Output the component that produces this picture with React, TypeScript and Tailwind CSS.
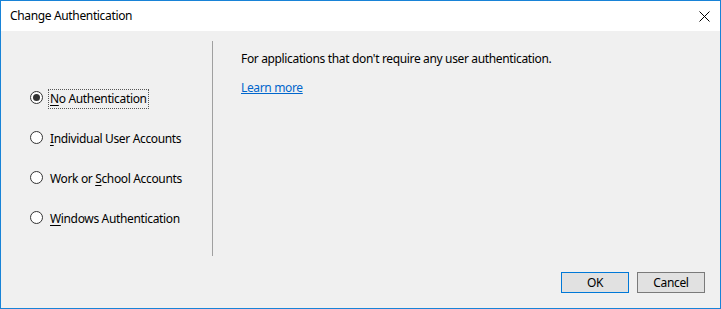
const options = [
  { key: 'N', before: '', rest: 'o Authentication', selected: true },
  { key: 'I', before: '', rest: 'ndividual User Accounts', selected: false },
  { key: 'S', before: 'Work or\u00a0', rest: 'chool Accounts', selected: false },
  { key: 'W', before: '', rest: 'indows Authentication', selected: false },
]

const RadioRow = ({
  option,
}: {
  option: (typeof options)[number]
}) => {
  return (
    <div className="flex items-center h-[20px]">
      <span className="w-[13px] h-[13px] rounded-full border border-[#333] bg-white flex items-center justify-center -mt-[3px]">
        {option.selected && (
          <span className="w-[7px] h-[7px] rounded-full bg-[#333]" />
        )}
      </span>
      <span
        className={
          option.selected
            ? 'ml-[5px] px-[1px] border border-dotted border-[#555] h-[20px] leading-[18px]'
            : 'ml-[5px] px-[1px] border border-transparent h-[20px] leading-[18px]'
        }
      >
        {option.before}
        <span className="underline underline-offset-2">{option.key}</span>
        {option.rest}
      </span>
    </div>
  )
}

export default function App() {
  return (
    <div
      className="w-[721px] h-[309px] border border-[#1883d7] flex flex-col text-[12px] tracking-[-0.35px] text-black bg-[#f0f0f0]"
      style={{ fontFamily: '"Noto Sans", "Liberation Sans", sans-serif' }}
    >
      <div className="h-[30px] bg-white flex items-center justify-between pl-[9px] pr-[9px]">
        <span>Change Authentication</span>
        <svg width="11" height="11" viewBox="0 0 11 11" className="mr-[1px]">
          <path d="M0.5 0.5 L10.5 10.5 M10.5 0.5 L0.5 10.5" stroke="#000" strokeWidth="1" />
        </svg>
      </div>

      <div className="flex-1 flex flex-col">
        <div className="flex mt-[10px] h-[215px]">
          <div className="w-[212px] border-r border-[#a0a0a0] pl-[29px] pt-[48px] flex flex-col gap-[20px]">
            {options.map((o) => (
              <RadioRow key={o.key} option={o} />
            ))}
          </div>
          <div className="pl-[28px] pt-[10px] flex flex-col gap-[13px]">
            <p className="leading-[16px]">
              For applications that don't require any user authentication.
            </p>
            <a className="leading-[16px] text-[#0066cc] underline w-fit cursor-pointer">
              Learn more
            </a>
          </div>
        </div>

        <div className="flex-1 flex items-end justify-end gap-[8px] pr-[15px] pb-[15px]">
          <button className="w-[68px] h-[21px] bg-[#e1e1e1] border border-[#0078d7] leading-none">
            OK
          </button>
          <button className="w-[68px] h-[21px] bg-[#e1e1e1] border border-[#7a7a7a] leading-none">
            Cancel
          </button>
        </div>
      </div>
    </div>
  )
}
